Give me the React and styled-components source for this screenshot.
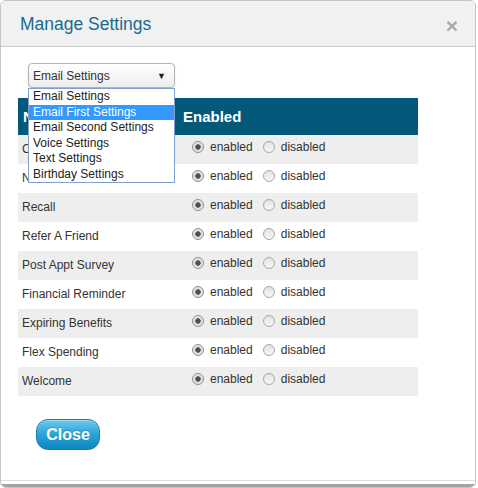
import React from "react";
import styled, { createGlobalStyle } from "styled-components";

const GlobalStyle = createGlobalStyle`
  html, body { margin: 0; padding: 0; background: #ffffff; }
  body { font-family: "Liberation Sans", Arial, sans-serif; }
`;

const rows = [
  "Confirmation",
  "New Patient",
  "Recall",
  "Refer A Friend",
  "Post Appt Survey",
  "Financial Reminder",
  "Expiring Benefits",
  "Flex Spending",
  "Welcome",
];

const options = [
  "Email Settings",
  "Email First Settings",
  "Email Second Settings",
  "Voice Settings",
  "Text Settings",
  "Birthday Settings",
];

export default function App() {
  return (
    <>
      <GlobalStyle />
      <Modal>
        <Header>
          <Title>Manage Settings</Title>
          <CloseX>×</CloseX>
        </Header>

        <Body>
          <SelectWrap>
            <Select>
              <span>Email Settings</span>
              <Arrow>▼</Arrow>
            </Select>
            <OptionList>
              {options.map((o, i) => (
                <Option key={o} $active={i === 1}>{o}</Option>
              ))}
            </OptionList>
          </SelectWrap>

          <Table>
            <HeadRow>
              <HeadCell>Name</HeadCell>
              <HeadCell>Enabled</HeadCell>
            </HeadRow>
            {rows.map((r, i) => (
              <Row key={r} $alt={i % 2 === 0}>
                <Label>{r}</Label>
                <Radios>
                  <Radio $checked />
                  <RadioText>enabled</RadioText>
                  <Radio />
                  <RadioText>disabled</RadioText>
                </Radios>
              </Row>
            ))}
          </Table>

          <CloseButton>Close</CloseButton>
        </Body>

        <Footer />
      </Modal>
    </>
  );
}

const Modal = styled.div`
  width: 474px;
  border: 1px solid #c4c4c4;
  border-radius: 6px;
  overflow: hidden;
  background: #ffffff;
`;

const Header = styled.div`
  height: 46px;
  background: #f0f1f1;
  border-bottom: 1px solid #c9c9c9;
  display: flex;
  align-items: center;
  justify-content: space-between;
  padding: 2px 17px 0 19px;
  box-sizing: border-box;
`;

const Title = styled.h1`
  margin: 0;
  font-family: "Liberation Sans", Arial, sans-serif;
  font-weight: 400;
  font-size: 17.5px;
  color: #1b6a8e;
`;

const CloseX = styled.span`
  font-family: "Liberation Sans", Arial, sans-serif;
  font-weight: 700;
  font-size: 21px;
  line-height: 1;
  color: #a9a9a9;
  margin-top: 2px;
`;

const Body = styled.div`
  padding: 16px 0 0 17px;
  height: 433px;
  box-sizing: border-box;
`;

const SelectWrap = styled.div`
  position: relative;
  margin-left: 10px;
  width: 147px;
`;

const Select = styled.div`
  height: 25px;
  box-sizing: border-box;
  border: 1px solid #b4b4b4;
  border-radius: 4px;
  background: linear-gradient(#ffffff, #ececec);
  box-shadow: 0 1px 2px rgba(0, 0, 0, 0.12);
  display: flex;
  align-items: center;
  justify-content: space-between;
  padding: 0 8px 0 4px;
  font-size: 12px;
  color: #333;
`;

const Arrow = styled.span`
  font-size: 9px;
  color: #222;
`;

const OptionList = styled.div`
  position: absolute;
  top: 25px;
  left: 0;
  width: 147px;
  box-sizing: border-box;
  border: 1px solid #7f9fd1;
  background: #ffffff;
  z-index: 5;
`;

const Option = styled.div`
  height: 15.5px;
  line-height: 15.5px;
  padding-left: 4px;
  font-size: 12px;
  color: ${(p) => (p.$active ? "#ffffff" : "#222")};
  background: ${(p) => (p.$active ? "#3399ff" : "transparent")};
`;

const Table = styled.div`
  width: 400px;
  margin-top: 10px;
`;

const HeadRow = styled.div`
  display: grid;
  grid-template-columns: 160px 1fr;
  height: 37px;
  background: #04597b;
`;

const HeadCell = styled.div`
  padding-left: 5px;
  line-height: 37px;
  font-size: 15px;
  font-weight: 700;
  color: #ffffff;
`;

const Row = styled.div`
  display: grid;
  grid-template-columns: 160px 1fr;
  height: 29px;
  background: ${(p) => (p.$alt ? "#eeeeee" : "#ffffff")};
`;

const Label = styled.div`
  padding: 7px 0 0 4px;
  line-height: 15px;
  font-size: 12px;
  color: #333;
`;

const Radios = styled.div`
  display: flex;
  align-items: center;
  height: 15px;
  padding: 4px 0 0 14px;
`;

const Radio = styled.span`
  width: 12px;
  height: 12px;
  border-radius: 50%;
  box-sizing: border-box;
  border: 1px solid ${(p) => (p.$checked ? "#8f8f8f" : "#a8a8a8")};
  background: ${(p) =>
    p.$checked
      ? "radial-gradient(circle, #505050 0 2.4px, #dcdcdc 3px, #f2f2f2 100%)"
      : "linear-gradient(#e2e2e2, #f8f8f8)"};
  margin-right: 6px;
`;

const RadioText = styled.span`
  font-size: 12px;
  color: #333;
  margin-right: 10px;
`;

const CloseButton = styled.button`
  margin: 23px 0 0 18px;
  width: 64px;
  height: 31px;
  border-radius: 12px;
  border: 1px solid #1a7aa8;
  background: linear-gradient(#6cc8ee, #2aa3d8 50%, #0c87c0);
  color: #ffffff;
  font-family: "Liberation Sans", Arial, sans-serif;
  font-weight: 700;
  font-size: 16px;
  text-shadow: 0 -1px 0 rgba(0, 0, 0, 0.2);
  box-shadow: inset 0 1px 0 rgba(255, 255, 255, 0.4);
  cursor: pointer;
`;

const Footer = styled.div`
  height: 3px;
  border-top: 1px solid #dddddd;
  border-bottom: 3px solid #a3a3a3;
`;
